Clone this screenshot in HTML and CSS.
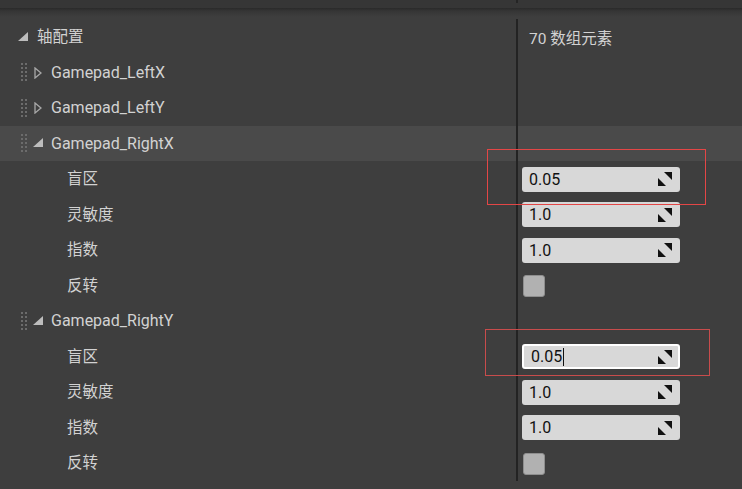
FILE: index.html
```html
<!DOCTYPE html>
<html>
<head>
<meta charset="utf-8">
<link rel="stylesheet" href="styles.css">
</head>
<body>
<div class="topbar"><div class="topbar-left"></div><div class="topbar-right"></div></div>
<div class="panel">
  <div class="row">
    <div class="name lvl0">
      <svg class="tri-open" width="10" height="9" viewBox="0 0 10 9"><polygon points="10,0 10,9 0,9" /></svg>
      <span class="label">轴配置</span>
    </div>
    <div class="value"><span class="count">70 数组元素</span></div>
  </div>

  <div class="row">
    <div class="name lvl1">
      <svg class="handle" width="6" height="18" viewBox="0 0 6 18"><rect x="0" y="0" width="2" height="2"/><rect x="4" y="0" width="2" height="2"/><rect x="0" y="4" width="2" height="2"/><rect x="4" y="4" width="2" height="2"/><rect x="0" y="8" width="2" height="2"/><rect x="4" y="8" width="2" height="2"/><rect x="0" y="12" width="2" height="2"/><rect x="4" y="12" width="2" height="2"/><rect x="0" y="16" width="2" height="2"/><rect x="4" y="16" width="2" height="2"/></svg>
      <svg class="tri-closed" width="8" height="12" viewBox="0 0 8 12"><polygon points="1,1 7,6 1,11" /></svg>
      <span class="label latin">Gamepad_LeftX</span>
    </div>
    <div class="value"></div>
  </div>

  <div class="row">
    <div class="name lvl1">
      <svg class="handle" width="6" height="18" viewBox="0 0 6 18"><rect x="0" y="0" width="2" height="2"/><rect x="4" y="0" width="2" height="2"/><rect x="0" y="4" width="2" height="2"/><rect x="4" y="4" width="2" height="2"/><rect x="0" y="8" width="2" height="2"/><rect x="4" y="8" width="2" height="2"/><rect x="0" y="12" width="2" height="2"/><rect x="4" y="12" width="2" height="2"/><rect x="0" y="16" width="2" height="2"/><rect x="4" y="16" width="2" height="2"/></svg>
      <svg class="tri-closed" width="8" height="12" viewBox="0 0 8 12"><polygon points="1,1 7,6 1,11" /></svg>
      <span class="label latin">Gamepad_LeftY</span>
    </div>
    <div class="value"></div>
  </div>

  <div class="row row-hover">
    <div class="name lvl1">
      <svg class="handle" width="6" height="18" viewBox="0 0 6 18"><rect x="0" y="0" width="2" height="2"/><rect x="4" y="0" width="2" height="2"/><rect x="0" y="4" width="2" height="2"/><rect x="4" y="4" width="2" height="2"/><rect x="0" y="8" width="2" height="2"/><rect x="4" y="8" width="2" height="2"/><rect x="0" y="12" width="2" height="2"/><rect x="4" y="12" width="2" height="2"/><rect x="0" y="16" width="2" height="2"/><rect x="4" y="16" width="2" height="2"/></svg>
      <svg class="tri-open tri-sub" width="10" height="9" viewBox="0 0 10 9"><polygon points="10,0 10,9 0,9" /></svg>
      <span class="label latin">Gamepad_RightX</span>
    </div>
    <div class="value"></div>
  </div>

  <div class="row">
    <div class="name lvl2"><span class="label">盲区</span></div>
    <div class="value"><div class="num"><span>0.05</span><svg class="spin" width="14" height="14" viewBox="0 0 14 14"><polygon points="6,0 14,0 14,8" /><polygon points="0,6 0,14 8,14" /></svg></div></div>
  </div>
  <div class="row">
    <div class="name lvl2"><span class="label">灵敏度</span></div>
    <div class="value"><div class="num"><span>1.0</span><svg class="spin" width="14" height="14" viewBox="0 0 14 14"><polygon points="6,0 14,0 14,8" /><polygon points="0,6 0,14 8,14" /></svg></div></div>
  </div>
  <div class="row">
    <div class="name lvl2"><span class="label">指数</span></div>
    <div class="value"><div class="num"><span>1.0</span><svg class="spin" width="14" height="14" viewBox="0 0 14 14"><polygon points="6,0 14,0 14,8" /><polygon points="0,6 0,14 8,14" /></svg></div></div>
  </div>
  <div class="row">
    <div class="name lvl2"><span class="label">反转</span></div>
    <div class="value"><div class="check"></div></div>
  </div>

  <div class="row">
    <div class="name lvl1">
      <svg class="handle" width="6" height="18" viewBox="0 0 6 18"><rect x="0" y="0" width="2" height="2"/><rect x="4" y="0" width="2" height="2"/><rect x="0" y="4" width="2" height="2"/><rect x="4" y="4" width="2" height="2"/><rect x="0" y="8" width="2" height="2"/><rect x="4" y="8" width="2" height="2"/><rect x="0" y="12" width="2" height="2"/><rect x="4" y="12" width="2" height="2"/><rect x="0" y="16" width="2" height="2"/><rect x="4" y="16" width="2" height="2"/></svg>
      <svg class="tri-open tri-sub" width="10" height="9" viewBox="0 0 10 9"><polygon points="10,0 10,9 0,9" /></svg>
      <span class="label latin">Gamepad_RightY</span>
    </div>
    <div class="value"></div>
  </div>

  <div class="row">
    <div class="name lvl2"><span class="label">盲区</span></div>
    <div class="value"><div class="num num-focus"><span>0.05</span><span class="caret"></span><svg class="spin" width="14" height="14" viewBox="0 0 14 14"><polygon points="6,0 14,0 14,8" /><polygon points="0,6 0,14 8,14" /></svg></div></div>
  </div>
  <div class="row">
    <div class="name lvl2"><span class="label">灵敏度</span></div>
    <div class="value"><div class="num"><span>1.0</span><svg class="spin" width="14" height="14" viewBox="0 0 14 14"><polygon points="6,0 14,0 14,8" /><polygon points="0,6 0,14 8,14" /></svg></div></div>
  </div>
  <div class="row">
    <div class="name lvl2"><span class="label">指数</span></div>
    <div class="value"><div class="num"><span>1.0</span><svg class="spin" width="14" height="14" viewBox="0 0 14 14"><polygon points="6,0 14,0 14,8" /><polygon points="0,6 0,14 8,14" /></svg></div></div>
  </div>
  <div class="row">
    <div class="name lvl2"><span class="label">反转</span></div>
    <div class="value"><div class="check"></div></div>
  </div>
</div>
<div class="callout callout-a"></div>
<div class="callout callout-b"></div>
</body>
</html>
```
FILE: styles.css
```css
* { box-sizing: border-box; }
html, body {
  margin: 0;
  padding: 0;
  width: 742px;
  height: 489px;
  overflow: hidden;
  background: #3e3e3e;
  font-family: Roboto, "Noto Sans CJK SC", sans-serif;
  font-size: 15.5px;
  color: #d2d2d2;
}
.topbar {
  display: flex;
  height: 8px;
  background: #363636;
}
.topbar-left {
  width: 518px;
  border-right: 2px solid #252525;
  height: 3px;
}
.panel {
  padding-top: 11.25px;
  background: linear-gradient(#2a2a2a 0px, #353535 3px, #3e3e3e 9px) no-repeat;
  background-size: 100% 12px;
}
.row {
  display: flex;
  height: 35.5px;
}
.row-hover {
  background: #4a4a4a;
}
.name {
  width: 518px;
  border-right: 2px solid #232323;
  display: flex;
  align-items: center;
}
.value {
  flex: 1;
  display: flex;
  align-items: center;
  padding-left: 4px;
}
.lvl0 { padding-left: 18px; }
.lvl0 .label { margin-left: 9px; }
.lvl1 { padding-left: 21px; }
.lvl2 { padding-left: 67px; }
.label { line-height: 20px; }
.latin { font-size: 16px; }
.handle { fill: #6c6c6c; flex: none; margin-top: -1px; }
.tri-open { fill: #bdbdbd; flex: none; margin-top: -2px; }
.tri-sub { margin-left: 6px; margin-right: 8px; }
.tri-closed {
  fill: none;
  stroke: #a8a8a8;
  stroke-width: 1.3;
  flex: none;
  margin-left: 7px;
  margin-right: 9px;
}
.count { margin-left: 7px; }
.num {
  width: 158px;
  height: 25px;
  background: #d8d8d8;
  border-radius: 3px;
  display: flex;
  align-items: center;
  padding: 0 8px 0 7px;
  color: #111;
  font-size: 16px;
}
.num span:first-child { flex: none; }
.num .spin { margin-left: auto; fill: #111; flex: none; }
.num-focus {
  border: 2px solid #ffffff;
  padding-left: 7px;
  padding-right: 6px;
}
.caret {
  width: 1px;
  height: 18px;
  background: #111;
  margin-left: 1px;
}
.check {
  width: 22px;
  height: 22px;
  margin-left: 1px;
  margin-top: 1px;
  background: #b1b1b1;
  border: 1px solid #8e8e8e;
  border-radius: 3px;
}
.callout {
  position: absolute;
  border: 1px solid #e34646;
  pointer-events: none;
}
.callout-a {
  left: 487px;
  top: 149px;
  width: 219px;
  height: 56px;
}
.callout-b {
  left: 485px;
  top: 329px;
  width: 225px;
  height: 47px;
  border-color: #c84c4c;
}
```
